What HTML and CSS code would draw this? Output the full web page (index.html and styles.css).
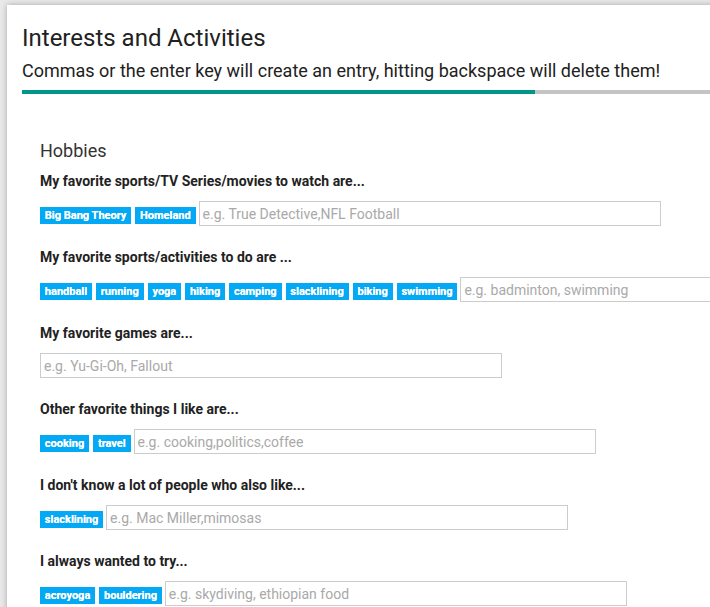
FILE: index.html
```html
<!DOCTYPE html>
<html>
<head>
<meta charset="utf-8">
<link rel="stylesheet" href="styles.css">
</head>
<body>
<div class="card">
  <h1 class="title">Interests and Activities</h1>
  <p class="subtitle">Commas or the enter key will create an entry, hitting backspace will delete them!</p>
  <div class="progress"><div class="progress-fill"></div></div>
  <div class="section">
    <h2 class="section-title">Hobbies</h2>

    <div class="group">
      <label class="label">My favorite sports/TV Series/movies to watch are...</label>
      <div class="tags">
        <span class="tag">Big Bang Theory</span>
        <span class="tag">Homeland</span>
        <input class="entry" type="text" placeholder="e.g. True Detective,NFL Football">
      </div>
    </div>

    <div class="group">
      <label class="label">My favorite sports/activities to do are ...</label>
      <div class="tags">
        <span class="tag">handball</span>
        <span class="tag">running</span>
        <span class="tag">yoga</span>
        <span class="tag">hiking</span>
        <span class="tag">camping</span>
        <span class="tag">slacklining</span>
        <span class="tag">biking</span>
        <span class="tag">swimming</span>
        <input class="entry" type="text" placeholder="e.g. badminton, swimming">
      </div>
    </div>

    <div class="group">
      <label class="label">My favorite games are...</label>
      <div class="tags">
        <input class="entry" type="text" placeholder="e.g. Yu-Gi-Oh, Fallout">
      </div>
    </div>

    <div class="group">
      <label class="label">Other favorite things I like are...</label>
      <div class="tags">
        <span class="tag">cooking</span>
        <span class="tag">travel</span>
        <input class="entry" type="text" placeholder="e.g. cooking,politics,coffee">
      </div>
    </div>

    <div class="group">
      <label class="label">I don't know a lot of people who also like...</label>
      <div class="tags">
        <span class="tag">slacklining</span>
        <input class="entry" type="text" placeholder="e.g. Mac Miller,mimosas">
      </div>
    </div>

    <div class="group">
      <label class="label">I always wanted to try...</label>
      <div class="tags">
        <span class="tag">acroyoga</span>
        <span class="tag">bouldering</span>
        <input class="entry" type="text" placeholder="e.g. skydiving, ethiopian food">
      </div>
    </div>
  </div>
</div>
</body>
</html>
```

FILE: styles.css
```css
html, body {
  margin: 0;
  padding: 0;
  overflow: hidden;
}
body {
  background: #e9e9e9;
  font-family: Roboto, "Liberation Sans", Arial, sans-serif;
  color: #222;
}
.card {
  background: #fff;
  margin: 5px 0 0 7px;
  width: 1100px;
  min-height: 800px;
  box-shadow: 0 0 6px rgba(0, 0, 0, 0.28);
  padding: 19px 0 0 15px;
  box-sizing: border-box;
}
.title {
  margin: 0;
  font-size: 24px;
  line-height: 28px;
  font-weight: 400;
  color: #212121;
}
.subtitle {
  margin: 8px 0 0 0;
  font-size: 18px;
  line-height: 22px;
  color: #212121;
}
.progress {
  margin-top: 8px;
  height: 4px;
  width: 1000px;
  background: #c4c4c4;
}
.progress-fill {
  height: 100%;
  width: 513px;
  background: #009688;
}
.section {
  padding: 46px 0 0 18px;
}
.section-title {
  margin: 0 0 9px 0;
  font-size: 18px;
  line-height: 22px;
  font-weight: 400;
  color: #333;
}
.group {
  margin-bottom: 21px;
}
.label {
  display: block;
  font-size: 14px;
  line-height: 20px;
  font-weight: 700;
  color: #222;
  margin-bottom: 10px;
}
.tags {
  display: flex;
  align-items: flex-end;
  gap: 4px;
  height: 25px;
}
.tag {
  background: #03a9f4;
  color: #fff;
  font-size: 11px;
  font-weight: 700;
  height: 17px;
  line-height: 17px;
  padding: 0 4.85px;
  margin-bottom: 2px;
  white-space: nowrap;
  text-shadow: 0 0 0.4px #fff;
}
.entry {
  flex: none;
  width: 462px;
  height: 25px;
  box-sizing: border-box;
  border: 1px solid #cccccc;
  margin: 0 0 0 -1px;
  padding: 0 3px;
  font-family: Roboto, "Liberation Sans", Arial, sans-serif;
  font-size: 14px;
  color: #333;
  outline: none;
}
.tags .entry:first-child {
  margin-left: 0;
}
.entry::placeholder {
  color: #a9a9a9;
}
```
